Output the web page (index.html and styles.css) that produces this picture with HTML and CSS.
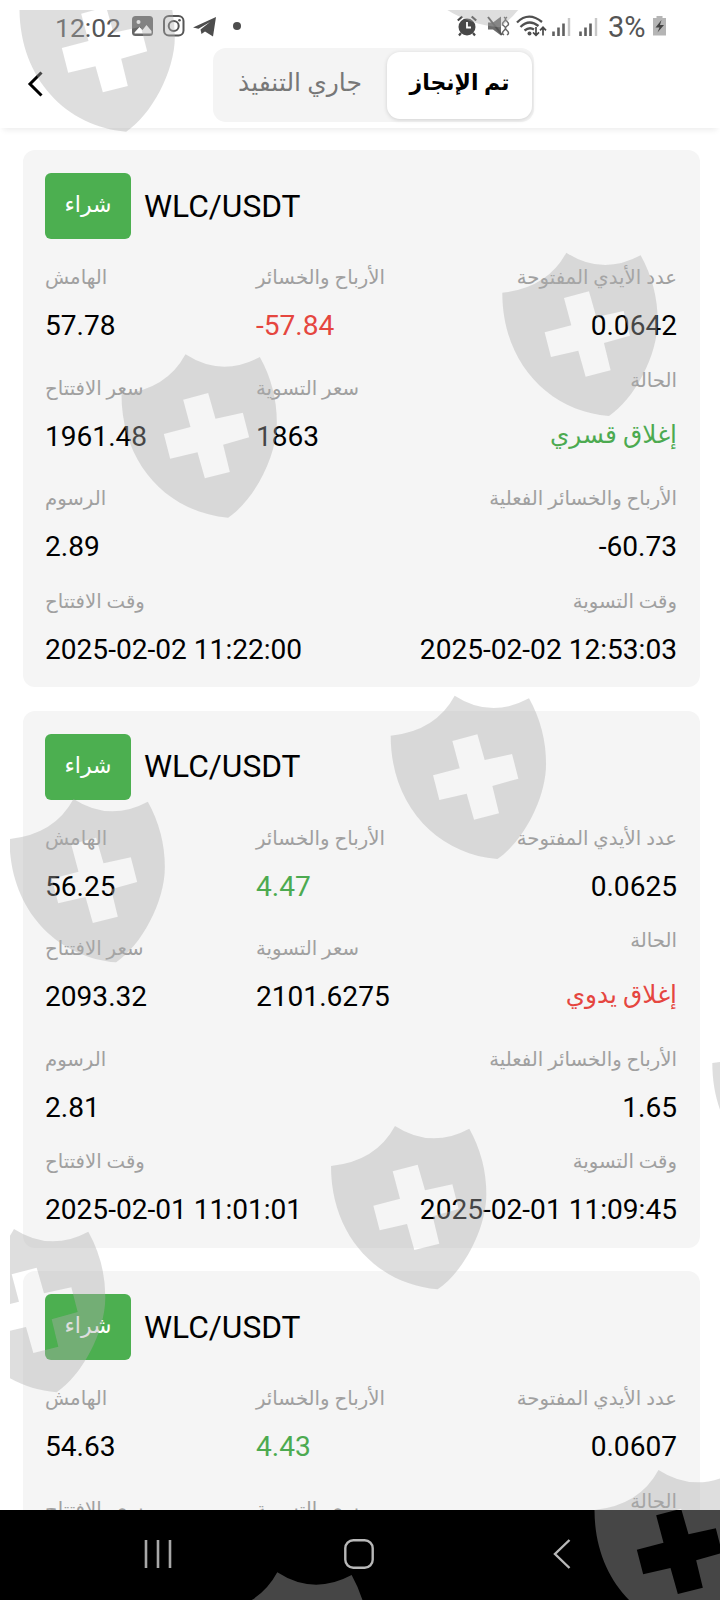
FILE: index.html
```html
<!DOCTYPE html>
<html lang="ar">
<head>
<meta charset="UTF-8">
<meta name="viewport" content="width=device-width, initial-scale=1.0">
<title>WLC/USDT</title>
<link rel="stylesheet" href="styles.css">
</head>
<body>
<div class="screen">

<div class="status-bar">
  <span class="clock">12:02</span>
  <svg class="left-icons" width="112" height="24" viewBox="0 0 112 24">
    <rect x="0" y="2" width="21" height="20" rx="3.5" fill="#666"/>
    <circle cx="6.5" cy="8" r="2" fill="#fff"/>
    <path d="M2.5 18.5l5-5.5 3 3 4-5 5 6v2.5h-17z" fill="#fff"/>
    <rect x="32" y="2" width="19.500" height="19.500" rx="5" fill="none" stroke="#555" stroke-width="2"/>
    <circle cx="41.700" cy="12" r="5" fill="none" stroke="#555" stroke-width="2"/>
    <circle cx="47.500" cy="6.300" r="1.300" fill="#555"/>
    <path d="M61 13.500L84 3l-3 19.500-8-5-3.500 2.500-1-4.500 9.500-7.500-11.500 6.800z" fill="#4d4d4d"/>
    <circle cx="105" cy="12" r="4" fill="#4d4d4d"/>
  </svg>
  <svg class="right-icons" width="142" height="24" viewBox="0 0 142 24">
    <circle cx="10" cy="13" r="8.500" fill="#484848"/>
    <path d="M.8 6.500l4.500-4M19.200 6.500l-4.500-4M4 19l-2 2.500M16 19l2 2.500" stroke="#484848" stroke-width="2.200"/>
    <path d="M10 8v5.500h4" fill="none" stroke="#fff" stroke-width="1.800"/>
    <path d="M31 8.500h5l8-6v19l-8-6h-5z" fill="#6c6c6c"/>
    <path d="M31 3l14 18" stroke="#555" stroke-width="2"/>
    <path d="M47 3q3 2 0 4.500t0 4.500 0 4.500 0 4.500M50 3q-3 2 0 4.500t0 4.500 0 4.500 0 4.500" fill="none" stroke="#666" stroke-width="1.500"/>
    <path d="M60 8.500Q71.500-3 85 8M63.500 13q8.500-8.500 18-1M67.500 16.500q5-4 9.500-1" fill="none" stroke="#505050" stroke-width="2.300"/>
    <circle cx="72.500" cy="19.500" r="2" fill="#505050"/>
    <path d="M79 13v8M76 18.300l3 3 3-3M86 21.500v-8M83 16.300l3-3 3 3" fill="none" stroke="#484848" stroke-width="1.700"/>
    <path d="M96.500 17.500V22M101.500 13.500V22M106.500 9.500V22" stroke="#606060" stroke-width="2.600"/>
    <path d="M112 4V22" stroke="#c8c8c8" stroke-width="2.400"/>
    <path d="M123.500 17.500V22M128.500 13.500V22M133.500 9.500V22" stroke="#606060" stroke-width="2.600"/>
    <path d="M139 4V22" stroke="#c8c8c8" stroke-width="2.400"/>
  </svg>
  <span class="percent">3%</span>
  <svg class="battery" width="15" height="20" viewBox="0 0 15 20">
    <path d="M4.500 0h6v2H14v17.500H1V2h3.500z" fill="#b5b5b5"/>
    <path d="M9.500 4L3.500 11.500h4L5.500 16.500l6.500-7.500H8z" fill="#444"/>
  </svg>
</div>

<div class="header">
  <svg class="back" width="16" height="28" viewBox="0 0 16 28">
    <path d="M14.500 2.500L3 14l11.500 11.500" fill="none" stroke="#000" stroke-width="3"/>
  </svg>
  <div class="tabs">
    <div class="tab">جاري التنفيذ</div>
    <div class="tab active">تم الإنجاز</div>
  </div>
</div>

<div class="list">

  <div class="card">
    <div class="card-head"><span class="badge">شراء</span><span class="pair">WLC/USDT</span></div>
    <div class="row">
      <div class="cell"><span class="label">الهامش</span><span class="value">57.78</span></div>
      <div class="cell"><span class="label">الأرباح والخسائر</span><span class="value red">-57.84</span></div>
      <div class="cell end"><span class="label">عدد الأيدي المفتوحة</span><span class="value">0.0642</span></div>
    </div>
    <div class="row">
      <div class="cell"><span class="label">سعر الافتتاح</span><span class="value">1961.48</span></div>
      <div class="cell"><span class="label">سعر التسوية</span><span class="value">1863</span></div>
      <div class="cell end state"><span class="label">الحالة</span><span class="value green">إغلاق قسري</span></div>
    </div>
    <div class="row short">
      <div class="cell"><span class="label">الرسوم</span><span class="value">2.89</span></div>
      <div class="cell end"><span class="label">الأرباح والخسائر الفعلية</span><span class="value">-60.73</span></div>
    </div>
    <div class="row">
      <div class="cell"><span class="label">وقت الافتتاح</span><span class="value">2025-02-02 11:22:00</span></div>
      <div class="cell end"><span class="label">وقت التسوية</span><span class="value">2025-02-02 12:53:03</span></div>
    </div>
  </div>

  <div class="card">
    <div class="card-head"><span class="badge">شراء</span><span class="pair">WLC/USDT</span></div>
    <div class="row">
      <div class="cell"><span class="label">الهامش</span><span class="value">56.25</span></div>
      <div class="cell"><span class="label">الأرباح والخسائر</span><span class="value green">4.47</span></div>
      <div class="cell end"><span class="label">عدد الأيدي المفتوحة</span><span class="value">0.0625</span></div>
    </div>
    <div class="row">
      <div class="cell"><span class="label">سعر الافتتاح</span><span class="value">2093.32</span></div>
      <div class="cell"><span class="label">سعر التسوية</span><span class="value">2101.6275</span></div>
      <div class="cell end state"><span class="label">الحالة</span><span class="value red">إغلاق يدوي</span></div>
    </div>
    <div class="row short">
      <div class="cell"><span class="label">الرسوم</span><span class="value">2.81</span></div>
      <div class="cell end"><span class="label">الأرباح والخسائر الفعلية</span><span class="value">1.65</span></div>
    </div>
    <div class="row">
      <div class="cell"><span class="label">وقت الافتتاح</span><span class="value">2025-02-01 11:01:01</span></div>
      <div class="cell end"><span class="label">وقت التسوية</span><span class="value">2025-02-01 11:09:45</span></div>
    </div>
  </div>

  <div class="card">
    <div class="card-head"><span class="badge">شراء</span><span class="pair">WLC/USDT</span></div>
    <div class="row">
      <div class="cell"><span class="label">الهامش</span><span class="value">54.63</span></div>
      <div class="cell"><span class="label">الأرباح والخسائر</span><span class="value green">4.43</span></div>
      <div class="cell end"><span class="label">عدد الأيدي المفتوحة</span><span class="value">0.0607</span></div>
    </div>
    <div class="row">
      <div class="cell"><span class="label">سعر الافتتاح</span></div>
      <div class="cell"><span class="label">سعر التسوية</span></div>
      <div class="cell end state"><span class="label">الحالة</span></div>
    </div>
  </div>

</div>

<div class="nav-bar">
  <svg class="recents" width="30" height="30" viewBox="0 0 30 30"><path d="M3 1v28M15 1v28M27 1v28" stroke="#a8a8a8" stroke-width="2.600"/></svg>
  <svg class="home" width="30" height="30" viewBox="0 0 30 30"><rect x="1.300" y="1.300" width="27.400" height="27.400" rx="8" fill="none" stroke="#b8b8b8" stroke-width="2.400"/></svg>
  <svg width="18" height="30" viewBox="0 0 18 30"><path d="M16.500 1L2 15l14.500 14" fill="none" stroke="#b8b8b8" stroke-width="2.400"/></svg>
</div>

<!-- shield watermark over the whole screen -->
<svg class="watermark" width="710" height="1590" viewBox="10 10 710 1590">
  <defs>
    <path id="shield" transform="scale(.33333)" fill-rule="evenodd" d="M0 120Q135 106 192 0Q300 70 415 8Q466 100 466 205C466 310 395 440 320 490C140 475 0 330 0 120ZM185 136L260 116 282 193 364 175 383 249 305 271 325 353 250 372 228 294 146 313 127 239 207 218Z"/>
  </defs>
  <use href="#shield" x="19.500" y="-31.700"/>
  <use href="#shield" x="393" y="-136"/>
  <use href="#shield" x="502.300" y="252.700"/>
  <use href="#shield" x="121.500" y="354.300"/>
  <use href="#shield" x="390.700" y="695.700"/>
  <use href="#shield" x="9.500" y="799"/>
  <use href="#shield" x="712.300" y="1023"/>
  <use href="#shield" x="331" y="1126"/>
  <use href="#shield" x="-50" y="1229"/>
  <use href="#shield" x="594.500" y="1470"/>
  <use href="#shield" x="213.300" y="1572.300"/>
</svg>

</div>
</body>
</html>
```
FILE: styles.css
```css
body, html {
    margin: 0;
    height: 100%;
    background: #fff;
    font-family: Roboto, "DejaVu Sans", sans-serif;
}
.screen {
    position: relative;
    display: flex;
    flex-direction: column;
    width: 720px;
    height: 1600px;
    overflow: hidden;
}
.status-bar {
    display: flex;
    align-items: center;
    height: 48px;
    padding: 4px 53px 0 55px;
    box-sizing: border-box;
    color: #555;
    font-size: 26.5px;
}
.clock {
    width: 77px;
    padding-top: 2px;
}
.right-icons {
    margin-left: auto;
    margin-right: 9px;
}
.percent {
    width: 42px;
    padding-top: 1px;
    font-size: 29px;
}
.battery {
    margin-left: 2px;
}
.header {
    display: flex;
    align-items: flex-start;
    height: 80px;
    flex: none;
    padding-left: 27px;
    box-shadow: 0 5px 6px -3px rgba(0,0,0,0.08);
}
.back {
    margin-top: 22px;
    margin-right: 170px;
}
.tabs {
    display: flex;
    box-sizing: border-box;
    width: 321px;
    height: 74px;
    padding: 4px 2px 3px 0;
    border-radius: 13px;
    background: #f4f4f4;
}
.tab {
    flex: 1;
    text-align: center;
    line-height: 62px;
    font-size: 25px;
    color: #777;
}
.tab.active {
    flex: none;
    width: 145px;
    border-radius: 13px;
    background: #fff;
    color: #000;
    font-size: 22px;
    font-weight: bold;
    box-shadow: 0 1px 4px rgba(0,0,0,0.15);
}
.list {
    flex: 1;
    min-height: 0;
    overflow: hidden;
    padding: 22px 20px 0 23px;
}
.card {
    box-sizing: border-box;
    height: 537px;
    margin-bottom: 23.7px;
    padding: 23px 23px 0 22px;
    border-radius: 12px;
    background: #f5f5f5;
}
.card-head {
    display: flex;
    align-items: center;
    margin-bottom: 19px;
}
.badge {
    width: 86px;
    height: 66px;
    line-height: 64px;
    margin-right: 13px;
    border-radius: 6px;
    background: #4caf50;
    color: #fff;
    font-size: 22px;
    text-align: center;
}
.pair {
    font-size: 31.7px;
    color: #000;
}
.row {
    display: flex;
    justify-content: space-between;
    height: 110.5px;
}
.row.short {
    height: 102.5px;
}
.cell {
    display: flex;
    flex-direction: column;
    align-items: flex-start;
    flex: 1;
    white-space: nowrap;
}
.cell + .cell {
    padding-left: 1px;
}
.cell.end {
    align-items: flex-end;
}
.label {
    height: 42px;
    line-height: 40px;
    font-size: 19.7px;
    color: #a0a0a0;
}
.value {
    height: 52px;
    line-height: 52px;
    font-size: 28.1px;
    color: #000;
}
.state {
    margin-top: -8px;
}
.state .value {
    font-size: 24.8px;
    line-height: 64px;
}
.red {
    color: #e5463f;
}
.green {
    color: #4caa50;
}
.nav-bar {
    display: flex;
    align-items: flex-start;
    flex: none;
    box-sizing: border-box;
    height: 90px;
    padding: 29px 0 0 143px;
    background: #000;
}
.recents {
    margin-right: 171px;
}
.home {
    margin-right: 179px;
}
.watermark {
    position: absolute;
    left: 10px;
    top: 10px;
    fill: rgba(173,173,173,0.404);
}
```
